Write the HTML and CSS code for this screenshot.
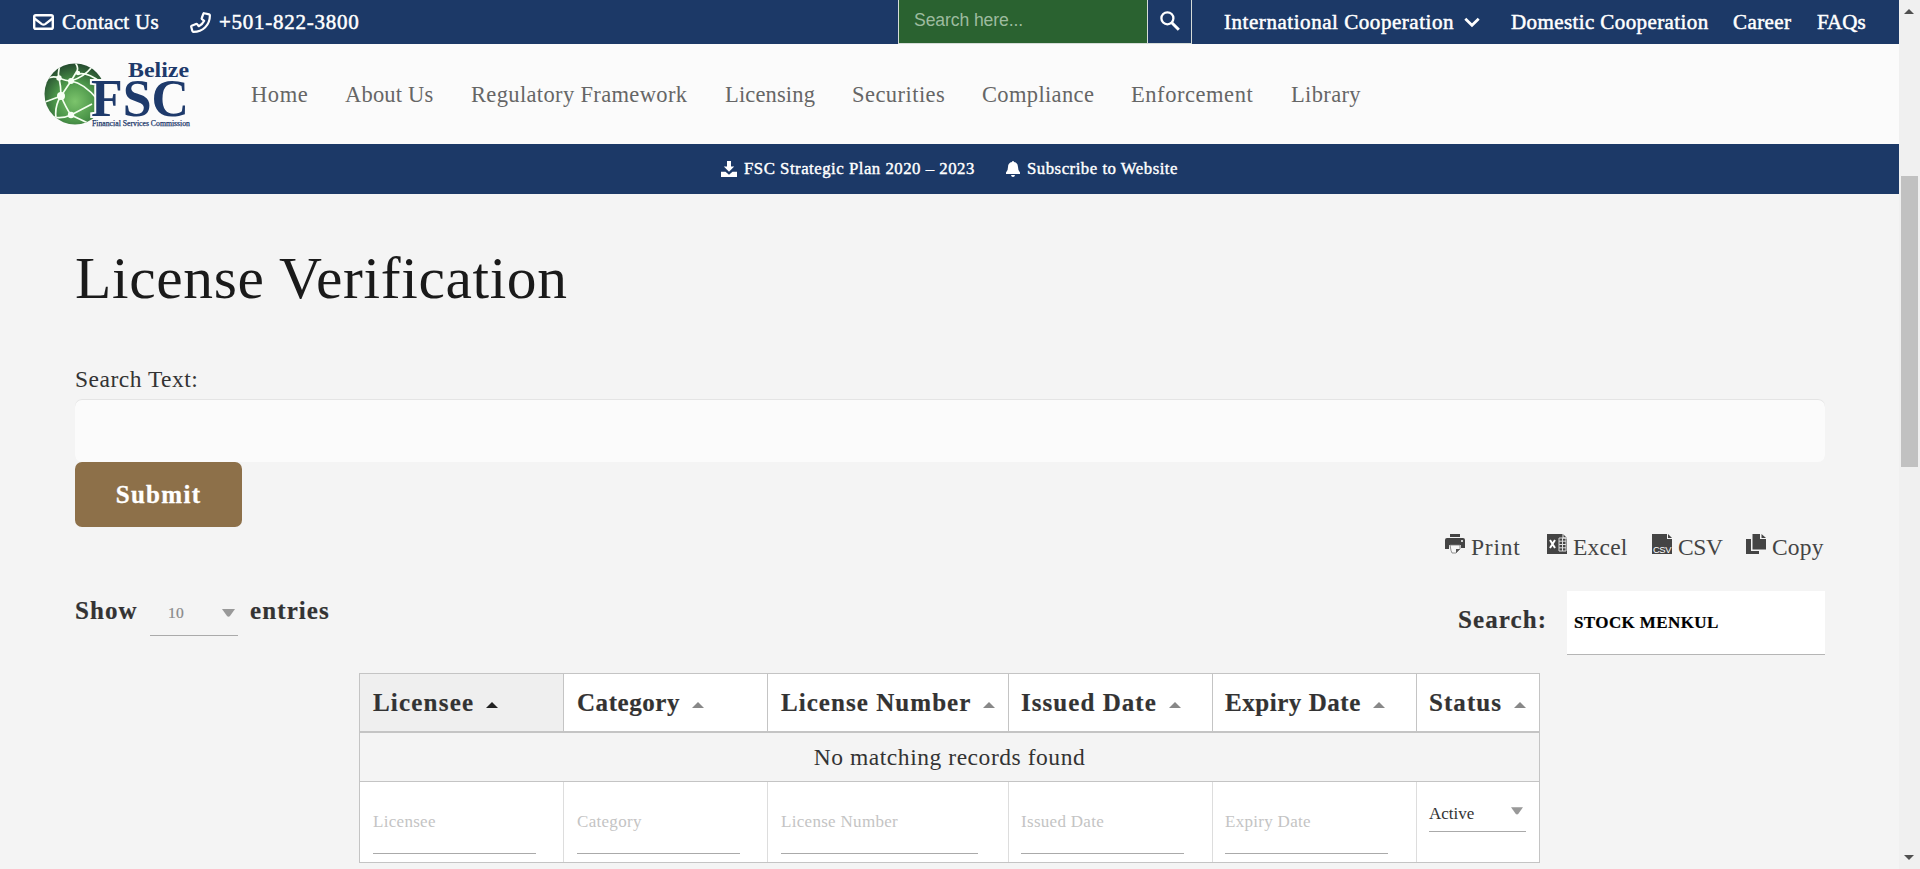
FILE: index.html
```html
<!DOCTYPE html>
<html lang="en">
<head>
<meta charset="utf-8">
<title>License Verification</title>
<link rel="stylesheet" href="styles.css">
</head>
<body>
<div class="window">
<div class="page">
  <div class="topbar">
    <a class="contact"><svg width="21" height="16" viewBox="0 0 21 16"><rect x="1.2" y="1.2" width="18.6" height="13.6" rx="1.6" fill="none" stroke="#fff" stroke-width="2.4"/><path d="M1.5 4.5l7.3 5.6q1.7 1.2 3.4 0l7.3-5.6" fill="none" stroke="#fff" stroke-width="2.3"/></svg><span>Contact Us</span></a>
    <a class="phone"><svg width="21" height="21" viewBox="0 0 21 21"><path d="M14.3 1.2l4.8 1.2q.8.2.8 1C19.800 13 13 19.800 3.400 19.900q-.8 0-1-.8L1.200 14.800q-.2-.8.5-1.100l4.300-1.800q.7-.3 1.100.2l1.700 2.100q3.600-1.700 5.400-5.400L12 7.100q-.5-.5-.2-1.100L13.400 1.700q.3-.7.9-.5z" fill="none" stroke="#fff" stroke-width="2.2" stroke-linejoin="round"/></svg><span>+501-822-3800</span></a>
    <div class="sitesearch">
      <div class="field">Search here...</div>
      <div class="go"><svg width="20" height="20" viewBox="0 0 20 20" fill="none" stroke="#fff"><circle cx="7.400" cy="7.300" r="6" stroke-width="2.300"/><path d="M11.800 11.800l7 7" stroke-width="3"/></svg></div>
    </div>
    <a class="intl">International Cooperation</a>
    <svg class="chev" width="16" height="11" viewBox="0 0 16 11"><path d="M1.300 1.700L8 8.300l6.700-6.600" fill="none" stroke="#fff" stroke-width="2.700"/></svg>
    <a class="domestic">Domestic Cooperation</a>
    <a class="career">Career</a>
    <a class="faqs">FAQs</a>
  </div>
  <div class="header">
    <svg class="logo" width="150" height="72" viewBox="0 0 150 72">
      <defs>
        <radialGradient id="globe" cx=".5" cy=".62" r=".6"><stop offset="0" stop-color="#7cc46c"/><stop offset=".55" stop-color="#4b9549"/><stop offset="1" stop-color="#274f30"/></radialGradient>
        <clipPath id="disc"><circle cx="33" cy="36" r="30.500"/></clipPath>
      </defs>
      <circle cx="33" cy="36" r="30.500" fill="url(#globe)"/>
      <g clip-path="url(#disc)" fill="none" stroke="#f4fff0" stroke-width="1.700">
        <path d="M2 22Q10 17 17 20T29 23Q42 19 50 9M20 3Q15 12 17 20T19 38Q11 50 15 66M32 3Q37 9 35 13L29 23 19 38Q24 50 29 57L48 66M3 44L19 38M29 23Q42 25 56 42M36 16Q46 14 58 24M12 59Q20 61 29 57L50 46"/>
      </g>
      <g fill="#f8fff5"><circle cx="17" cy="20" r="2.700"/><circle cx="29" cy="23" r="3"/><circle cx="19" cy="38" r="4"/><circle cx="29" cy="57" r="3.200"/><circle cx="36" cy="15" r="2.200"/></g>
      <g font-family="Liberation Serif, serif" font-weight="bold" fill="#1e3a6b">
        <text x="86" y="19" font-size="22" textLength="61" lengthAdjust="spacingAndGlyphs">Belize</text>
        <text x="49" y="58" font-size="53" textLength="98" lengthAdjust="spacingAndGlyphs" stroke="#fbfbfb" stroke-width="4" paint-order="stroke">FSC</text>
        <text x="50" y="67.500" font-size="7.500" font-weight="normal" stroke="#1e3a6b" stroke-width=".25" textLength="98" lengthAdjust="spacingAndGlyphs">Financial Services Commission</text>
      </g>
    </svg>
    <nav class="nav">
      <a class="n-home">Home</a><a class="n-about">About Us</a><a class="n-reg">Regulatory Framework</a><a class="n-lic">Licensing</a><a class="n-sec">Securities</a><a class="n-comp">Compliance</a><a class="n-enf">Enforcement</a><a>Library</a>
    </nav>
  </div>
  <div class="subbar">
    <svg class="dl" width="16" height="16" viewBox="0 0 16 16" fill="#fff"><path d="M6 0h4v5.500h3.200L8 10.700 2.800 5.500H6z"/><path d="M0 10.700h4.500L8 13.700l3.500-3H16V16H0z"/></svg>
    <a class="plan">FSC Strategic Plan 2020 – 2023</a>
    <svg class="bell" width="14" height="16" viewBox="0 0 14 16" fill="#fff"><path d="M7 0q1 0 1 1.100 4 .8 4 5 0 4 2 5.400V13H0v-1.500q2-1.400 2-5.400 0-4.200 4-5Q6 0 7 0z"/><path d="M5 14h4q-.3 2-2 2t-2-2z"/></svg>
    <a>Subscribe to Website</a>
  </div>
  <main>
    <h1>License Verification</h1>
    <label class="lead">Search Text:</label>
    <div class="query"></div>
    <button class="submit">Submit</button>
    <div class="exports">
      <a class="x-print"><svg width="20" height="20" viewBox="0 0 20 20"><path fill="#444" d="M5 0h10v3H5zM2 4h16q2 0 2 2v8h-4v-3H4v4H0V6q0-2 2-2z"/><path d="M5 11h10v4l-4 4H7q-1-1-2-8z" fill="#f7f7f7" stroke="#777" stroke-width=".8"/><path d="M11 19v-4h4z" fill="#555"/><circle cx="17" cy="7" r="1" fill="#fff"/></svg><span>Print</span></a>
      <a class="x-excel"><svg width="20" height="20" viewBox="0 0 20 20"><path fill="#444" d="M0 0h16l4 4v16H0z"/><path d="M12 4h7v13h-7zM12 7.200h7M12 10.500h7M12 13.800h7M15.500 4v13" fill="none" stroke="#ddd"/><path d="M3 6l5 8M8 6l-5 8" stroke="#fff" stroke-width="2"/><path d="M16 0v4h4" fill="none" stroke="#eee"/></svg><span>Excel</span></a>
      <a class="x-csv"><svg class="csv" width="20" height="20" viewBox="0 0 20 20"><path fill="#444" d="M0 0h15v5h5v15H0zM16 0l4 4h-4z"/><text x="1" y="19.300" font-family="Liberation Sans, sans-serif" font-size="9.500" fill="#fff" textLength="18" lengthAdjust="spacingAndGlyphs">CSV</text></svg><span>CSV</span></a>
      <a class="x-copy"><svg width="20" height="20" viewBox="0 0 20 20" fill="#444"><path d="M0 5h5v12h8v3H0z"/><path d="M6.500 0H14v5h6v10.500H6.500zM15.500 0L20 4h-4.500z"/></svg><span>Copy</span></a>
    </div>
    <div class="controls">
      <div class="length"><b class="show">Show</b><div class="select"><span>10</span><svg width="13" height="8" viewBox="0 0 13 8"><path d="M0 0h13L8 7q-1.500 1.500-3 0z" fill="#999"/></svg></div><b>entries</b></div>
      <div class="filter"><b>Search:</b><div class="box">STOCK MENKUL</div></div>
    </div>
    <table class="grid">
      <colgroup><col class="w204"><col class="w204"><col class="w241"><col class="w204"><col class="w204"><col class="w123"></colgroup>
      <thead><tr>
        <th class="sorted">Licensee<i></i></th><th class="tight">Category<i></i></th><th>License Number<i></i></th><th class="shift">Issued Date<i></i></th><th class="shift tight">Expiry Date<i></i></th><th class="shift">Status<i></i></th>
      </tr></thead>
      <tbody><tr><td colspan="6">No matching records found</td></tr></tbody>
      <tfoot><tr>
        <td><div class="ph">Licensee</div></td><td><div class="ph">Category</div></td><td><div class="ph wide">License Number</div></td><td class="shift"><div class="ph">Issued Date</div></td><td class="shift"><div class="ph">Expiry Date</div></td>
        <td class="shift"><div class="status"><span>Active</span><svg width="12" height="8" viewBox="0 0 13 8"><path d="M0 0h13L8 7q-1.500 1.500-3 0z" fill="#999"/></svg></div></td>
      </tr></tfoot>
    </table>
  </main>
</div>
<div class="scroll"><i class="up"></i><div class="thumb"></div><i class="down"></i></div>
</div>
</body>
</html>
```
FILE: styles.css
```css
* { box-sizing: border-box; }
body { margin: 0; background: #f4f4f4; font-family: Georgia, "Liberation Serif", serif; color: #333; }
svg { display: block; flex: none; }
.window { display: flex; height: 869px; overflow: hidden; }
.page { width: 1899px; flex: none; }

.topbar { display: flex; align-items: center; height: 44px; background: #1c3967; color: #fff; font-size: 21px; letter-spacing: .4px; white-space: nowrap; padding-left: 33px; -webkit-text-stroke: .5px #fff; }
.contact, .phone { display: flex; align-items: center; gap: 8px; }
.contact { width: 157px; }
.contact span { letter-spacing: .3px; }
.phone { width: 708px; }
.phone span { letter-spacing: .75px; }
.sitesearch { display: flex; align-self: flex-start; width: 294px; height: 44px; border: 1px solid #d5dcd8; border-top: 0; margin-right: 32px; }
.field { width: 248px; padding-left: 15px; background: #2a6230; color: #9dbb9f; font: 17.6px/41px "Liberation Sans", sans-serif; letter-spacing: -.1px; -webkit-text-stroke: 0; }
.go { flex: 1; border-left: 1px solid #d5dcd8; display: flex; align-items: center; justify-content: center; padding-bottom: 1px; }
.intl { width: 240px; letter-spacing: .55px; }
.chev { margin-right: 31px; }
.domestic { width: 222px; }
.career { width: 84px; }
.faqs { letter-spacing: 0; }

.header { display: flex; align-items: center; height: 100px; background: #fbfbfb; padding-left: 42px; }
.logo { margin-right: 59px; }
.nav { display: flex; padding-top: 1px; font-size: 22.5px; letter-spacing: .35px; color: #666; white-space: nowrap; }
.n-home { width: 94px; letter-spacing: .6px; }
.n-about { width: 126px; letter-spacing: .2px; }
.n-reg { width: 254px; }
.n-lic { width: 127px; letter-spacing: .15px; }
.n-sec { width: 130px; letter-spacing: .45px; }
.n-comp { width: 149px; }
.n-enf { width: 160px; letter-spacing: .55px; }

.subbar { display: flex; align-items: center; height: 50px; background: #1c3967; color: #fff; font-size: 16.8px; letter-spacing: .5px; padding-left: 721px; white-space: nowrap; -webkit-text-stroke: .4px #fff; }
.dl { margin-right: 7px; }
.plan { width: 262px; }
.bell { margin-right: 7px; }

main { padding: 0 74px 0 75px; }
h1 { margin: 0; padding-top: 52px; height: 166px; font-size: 59.5px; line-height: 64px; font-weight: normal; letter-spacing: .65px; color: #1a1a1a; }
.lead { display: block; height: 39px; padding-top: 4px; font-size: 23.5px; line-height: 30px; letter-spacing: .5px; }
.query { height: 63px; background: #fbfbfb; border-radius: 7px; box-shadow: inset 0 1px #e4e4e4; }
.submit { display: block; width: 167px; height: 65px; border: 0; border-radius: 7px; padding: 0; background: #8d7049; color: #fff; font: bold 25px "Liberation Serif", serif; letter-spacing: 1.3px; -webkit-text-stroke: .3px #fff; }
.exports { display: flex; justify-content: flex-end; height: 64px; padding-top: 7px; font-size: 23.5px; letter-spacing: .2px; line-height: 26px; color: #444; }
.exports a { display: flex; gap: 6px; }
.x-print { width: 102px; letter-spacing: .8px; }
.x-excel { width: 105px; }
.x-csv { width: 94px; letter-spacing: -.4px; }
.x-copy { width: 79px; }
.csv { overflow: visible; }
.controls { display: flex; justify-content: space-between; height: 82px; font-size: 25px; letter-spacing: 1.1px; -webkit-text-stroke: .2px; }
.length { display: flex; line-height: 40px; }
.show { width: 75px; }
.select { display: flex; align-items: center; justify-content: space-between; width: 88px; height: 45px; padding: 0 3px 0 18px; margin-right: 12px; border-bottom: 1px solid #aaa; font-size: 15.5px; letter-spacing: .3px; color: #888; }
.filter { display: flex; line-height: 58px; }
.filter b { width: 109px; }
.box { width: 258px; height: 64px; background: #fff; border-bottom: 1px solid #b5b5b5; padding-left: 7px; font-weight: bold; font-size: 17px; line-height: 63px; letter-spacing: .4px; color: #000; }

.grid { table-layout: fixed; border-collapse: separate; border-spacing: 0; width: 1181px; margin-left: 284px; border: 1px solid #c4c4c4; background: #fff; }
.w204 { width: 204px; }
.w241 { width: 241px; }
.w123 { width: 122px; }
.grid th { height: 59px; padding: 0 0 0 13px; border-bottom: 2px solid #c4c4c4; border-right: 1px solid #c4c4c4; text-align: left; font-size: 25px; line-height: 30px; letter-spacing: 1.05px; white-space: nowrap; -webkit-text-stroke: .2px; }
.grid th.tight { letter-spacing: .55px; }
.grid th.sorted { background: #efefef; letter-spacing: 1.2px; }
.grid .shift { padding-left: 12px; }
.grid th:last-child, .grid td:last-child { border-right: 0; }
th i { display: inline-block; vertical-align: 3px; margin-left: 12px; border: 6px solid transparent; border-top: 0; border-bottom-color: #888; }
.sorted i { border-bottom-color: #222; }
tbody td { height: 49px; padding: 0; background: #f4f4f4; border-bottom: 1px solid #c4c4c4; text-align: center; font-size: 23.5px; letter-spacing: .55px; }
tfoot td { height: 80px; padding: 0 0 0 13px; vertical-align: top; border-right: 1px solid #ddd; }
.ph { width: 163px; height: 72px; padding-top: 28px; border-bottom: 1px solid #aaa; font-size: 17px; line-height: 24px; letter-spacing: .3px; color: #c4c4c4; }
.ph.wide { width: 197px; }
.status { display: flex; justify-content: space-between; width: 97px; height: 50px; padding: 20px 3px 0 0; border-bottom: 1px solid #aaa; font-size: 17px; line-height: 24px; color: #333; }
.status svg { margin-top: 5px; }

.scroll { width: 21px; background: #f0f0f0; display: flex; flex-direction: column; align-items: center; padding: 9px 1px 9px 0; }
.up, .down { border: 5px solid transparent; }
.up { border-top: 0; border-bottom-color: #505050; }
.down { border-bottom: 0; border-top-color: #505050; margin-top: auto; }
.thumb { width: 17px; height: 291px; margin-top: 162px; background: #c1c1c1; }
```
